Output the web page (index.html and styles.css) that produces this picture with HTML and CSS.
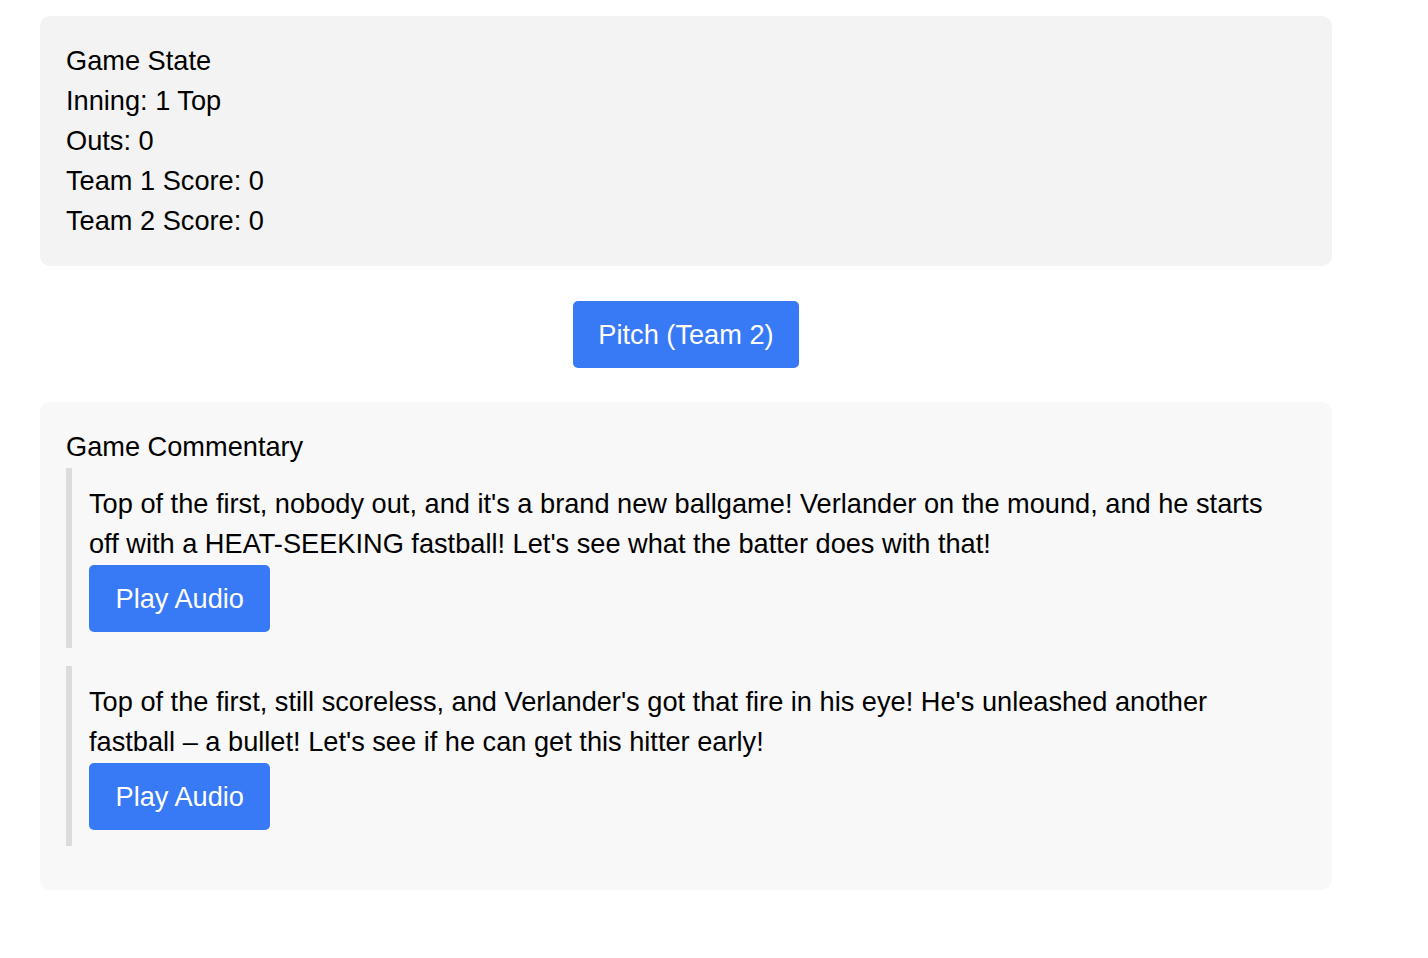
FILE: index.html
```html
<!DOCTYPE html>
<html>
<head>
<meta charset="utf-8">
<link rel="stylesheet" href="styles.css">
</head>
<body>
<div class="app">
  <div class="panel state">
    <div class="line">Game State</div>
    <div class="line">Inning: 1 Top</div>
    <div class="line">Outs: 0</div>
    <div class="line">Team 1 Score: 0</div>
    <div class="line">Team 2 Score: 0</div>
  </div>
  <div class="actions">
    <button class="btn">Pitch (Team 2)</button>
  </div>
  <div class="panel commentary">
    <div class="line">Game Commentary</div>
    <div class="entry">
      <p class="text">Top of the first, nobody out, and it's a brand new ballgame! Verlander on the mound, and he starts off with a HEAT-SEEKING fastball! Let's see what the batter does with that!</p>
      <button class="btn btn-audio">Play Audio</button>
    </div>
    <div class="entry">
      <p class="text">Top of the first, still scoreless, and Verlander's got that fire in his eye! He's unleashed another fastball – a bullet! Let's see if he can get this hitter early!</p>
      <button class="btn btn-audio">Play Audio</button>
    </div>
  </div>
</div>
</body>
</html>
```
FILE: styles.css
```css
html, body {
  margin: 0;
  padding: 0;
  background: #ffffff;
}
body {
  font-family: "Liberation Sans", Arial, sans-serif;
  font-size: 27.2px;
  line-height: 40px;
  color: #000;
}
.app {
  width: 1292px;
  padding: 16px 0 0 40px;
}
.panel {
  border-radius: 10px;
  padding: 25px 26px;
}
.state {
  background: #f3f3f3;
}
.commentary {
  background: #f8f8f8;
  padding-bottom: 26px;
}
.actions {
  display: flex;
  justify-content: center;
  padding: 35px 0 34px;
}
.btn {
  font-family: inherit;
  font-size: 27.2px;
  line-height: 31px;
  color: #fff;
  background: #3879f5;
  border: none;
  border-radius: 5px;
  padding: 18px 25px;
  margin: 0;
  display: block;
}
.entry {
  border-left: 6px solid #dcdcdc;
  padding: 16px 17px;
  margin-top: 1px;
  margin-bottom: 18px;
}
.text {
  margin: 0;
}
.entry .btn-audio {
  margin-top: 1px;
  padding-left: 26.5px;
  padding-right: 26.5px;
}
```
